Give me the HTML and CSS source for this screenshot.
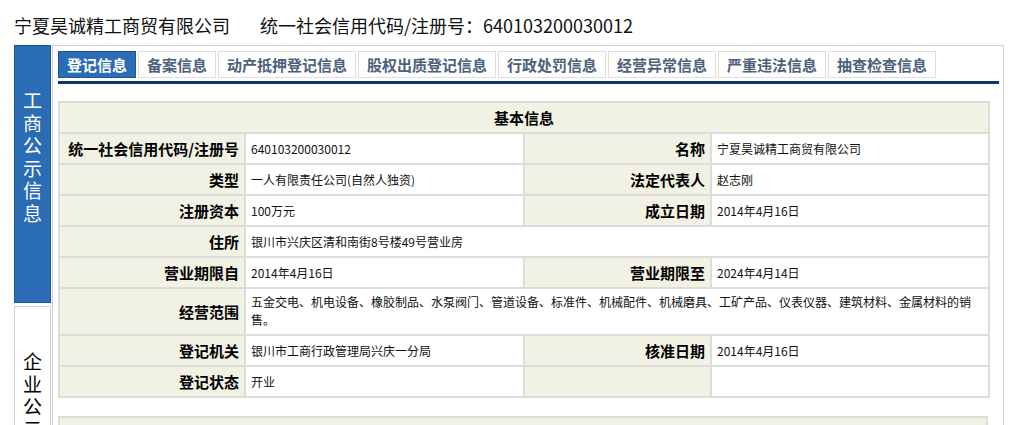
FILE: index.html
```html
<!DOCTYPE html>
<html lang="zh-CN">
<head>
    <meta charset="UTF-8">
    <title>企业信用信息公示</title>
    <link rel="stylesheet" href="styles.css">
</head>
<body>
    <div class="title">
        <span>宁夏昊诚精工商贸有限公司</span>
        <span class="code">统一社会信用代码/注册号：640103200030012</span>
    </div>

    <div class="wrap">
        <div class="side">
            <div class="side_item active"><p>工商公示信息</p></div>
            <div class="side_item"><p>企业公示信息</p></div>
        </div>

        <div class="main">
            <ul class="tabs">
                <li class="current">登记信息</li>
                <li>备案信息</li>
                <li>动产抵押登记信息</li>
                <li>股权出质登记信息</li>
                <li>行政处罚信息</li>
                <li>经营异常信息</li>
                <li>严重违法信息</li>
                <li>抽查检查信息</li>
            </ul>

            <table class="info">
                <colgroup>
                    <col class="c_label">
                    <col class="c_value">
                    <col class="c_label2">
                    <col class="c_value2">
                </colgroup>
                <tr>
                    <th colspan="4" class="head">基本信息</th>
                </tr>
                <tr>
                    <th>统一社会信用代码/注册号</th>
                    <td>640103200030012</td>
                    <th>名称</th>
                    <td>宁夏昊诚精工商贸有限公司</td>
                </tr>
                <tr>
                    <th>类型</th>
                    <td>一人有限责任公司(自然人独资)</td>
                    <th>法定代表人</th>
                    <td>赵志刚</td>
                </tr>
                <tr>
                    <th>注册资本</th>
                    <td>100万元</td>
                    <th>成立日期</th>
                    <td>2014年4月16日</td>
                </tr>
                <tr>
                    <th>住所</th>
                    <td colspan="3">银川市兴庆区清和南街8号楼49号营业房</td>
                </tr>
                <tr>
                    <th>营业期限自</th>
                    <td>2014年4月16日</td>
                    <th>营业期限至</th>
                    <td>2024年4月14日</td>
                </tr>
                <tr>
                    <th>经营范围</th>
                    <td colspan="3" class="multi">五金交电、机电设备、橡胶制品、水泵阀门、管道设备、标准件、机械配件、机械磨具、工矿产品、仪表仪器、建筑材料、金属材料的销售。</td>
                </tr>
                <tr>
                    <th>登记机关</th>
                    <td>银川市工商行政管理局兴庆一分局</td>
                    <th>核准日期</th>
                    <td>2014年4月16日</td>
                </tr>
                <tr>
                    <th>登记状态</th>
                    <td>开业</td>
                    <th></th>
                    <td></td>
                </tr>
            </table>

            <table class="info second">
                <tr>
                    <th class="head">股东信息</th>
                </tr>
                <tr>
                    <td>&nbsp;</td>
                </tr>
            </table>
        </div>
    </div>
</body>
</html>
```

FILE: styles.css
```css
body {
    margin: 0;
    height: 425px;
    overflow: hidden;
    background: #fff;
    font-family: "Noto Sans CJK SC", sans-serif;
    color: #000;
}

.title {
    padding: 13px 0 0 14px;
    height: 24px;
    font-size: 18px;
    line-height: 24px;
    color: #111;
    white-space: nowrap;
}

.title .code {
    margin-left: 26px;
}

.wrap {
    display: flex;
    margin: 8px 0 0 14px;
    gap: 1px;
}

.side {
    display: flex;
    flex-direction: column;
    gap: 3px;
    width: 37px;
}

.side_item {
    box-sizing: border-box;
    height: 258px;
    border: 1px solid #cfcfcf;
    padding-top: 43px;
}

.side_item p {
    width: 19px;
    margin: 0 auto;
    font-size: 19px;
    line-height: 22.5px;
    text-align: center;
}

.side_item.active {
    background: #2b6db4;
    border-color: #1e5596;
    color: #fff;
}

.main {
    box-sizing: border-box;
    width: 952px;
    height: 600px;
    border: 1px solid #cfcfcf;
    padding: 5px 4px 0 5px;
}

.tabs {
    display: flex;
    gap: 2px;
    margin: 0;
    padding: 0 0 3px 0;
    list-style: none;
    border-bottom: 3px solid #0d3766;
}

.tabs li {
    height: 25px;
    padding: 0 8px;
    border: 1px solid #dedede;
    font-size: 15px;
    line-height: 25px;
    font-weight: bold;
    color: #4c617c;
}

.tabs li.current {
    background: #2b6db4;
    border-color: #1e5596;
    color: #fff;
}

.info {
    width: 930px;
    margin-top: 17px;
    border-collapse: collapse;
    table-layout: fixed;
}

.c_label { width: 186px; }
.c_value { width: 279px; }
.c_label2 { width: 187px; }
.c_value2 { width: 278px; }

.info th,
.info td {
    border: 2px solid #dcdcdc;
    height: 31px;
    padding: 4px 5px;
    line-height: 18px;
    box-sizing: border-box;
}

.info td.multi {
    height: 47px;
    padding: 4px 5px 5px;
}

.info th {
    background: #f1f1e4;
    font-size: 15px;
    font-weight: bold;
    text-align: right;
    padding-right: 5px;
}

.info th.head {
    text-align: center;
}

.info td {
    font-size: 12px;
    color: #111;
    vertical-align: middle;
}

.info.second {
    margin-top: 18px;
}
```
